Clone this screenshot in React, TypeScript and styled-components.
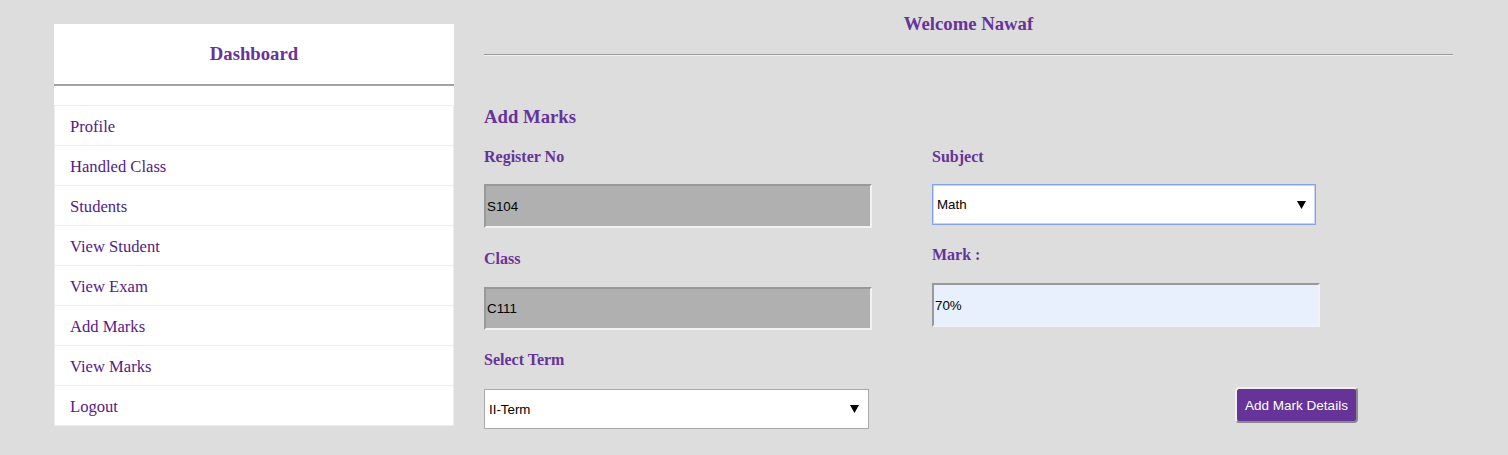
import React from "react";
import styled, { createGlobalStyle } from "styled-components";

const Global = createGlobalStyle`
  html, body { margin: 0; padding: 0; background: #dddddd; }
  body { font-family: "Liberation Serif", "Times New Roman", serif; }
  * { box-sizing: border-box; }
`;

const Page = styled.div`
  display: flex;
  align-items: flex-start;
  padding: 0 55px 0 54px;
  min-height: 455px;
`;

const Sidebar = styled.nav`
  width: 400px;
  flex: none;
  margin-top: 24px;
  background: #ffffff;
`;

const SideHeader = styled.div`
  height: 62px;
  padding-top: 19px;
  border-bottom: 2px solid #a3a3a3;
  text-align: center;
`;

const PurpleTitle = styled.h3`
  margin: 0;
  font-family: "Liberation Serif", "Times New Roman", serif;
  font-size: 18.72px;
  line-height: 22px;
  font-weight: bold;
  color: #663399;
`;

const MenuList = styled.ul`
  list-style: none;
  margin: 19px 0 0 0;
  padding: 0;
`;

const MenuItem = styled.li`
  height: 41px;
  margin-bottom: -1px;
  border: 1px solid #ececec;
  padding: 2px 15px 0;
  display: flex;
  align-items: center;
`;

const MenuLink = styled.a`
  font-family: "Liberation Serif", "Times New Roman", serif;
  font-size: 16.6px;
  color: #551a8b;
  text-decoration: none;
`;

const Main = styled.main`
  flex: 1;
  margin-left: 30px;
`;

const WelcomeBar = styled.div`
  padding-top: 13px;
  height: 54px;
  text-align: center;
`;

const Rule = styled.hr`
  margin: 0;
  border: none;
  border-top: 1px solid #9a9a9a;
  border-bottom: 1px solid #efefef;
`;

const SectionTitle = styled(PurpleTitle)`
  margin-top: 49px;
  line-height: 24px;
`;

const Columns = styled.div`
  display: grid;
  grid-template-columns: 448px 1fr;
`;

const Column = styled.div`
  display: flex;
  flex-direction: column;
  align-items: flex-start;
`;

const Label = styled.label<{ $top: number }>`
  display: block;
  margin-top: ${(p) => p.$top}px;
  font-family: "Liberation Serif", "Times New Roman", serif;
  font-size: 16px;
  font-weight: bold;
  line-height: 20px;
  color: #663399;
`;

const TextBox = styled.input<{ $top: number; $bg: string; $h: number }>`
  display: block;
  margin-top: ${(p) => p.$top}px;
  width: 388px;
  height: ${(p) => p.$h}px;
  padding: 0 1px;
  background: ${(p) => p.$bg};
  border: 2px solid;
  border-color: #999999 #f2f2f2 #f2f2f2 #999999;
  font-family: "Liberation Sans", Arial, sans-serif;
  font-size: 13.33px;
  color: #000000;
  outline: none;
`;

const SelectWrap = styled.div<{ $top: number; $w: number; $h: number }>`
  position: relative;
  margin-top: ${(p) => p.$top}px;
  width: ${(p) => p.$w}px;
  height: ${(p) => p.$h}px;
`;

const Select = styled.select<{ $focus?: boolean }>`
  appearance: none;
  -webkit-appearance: none;
  width: 100%;
  height: 100%;
  margin: 0;
  padding: 0 0 0 4px;
  background: #ffffff;
  border: 1px solid ${(p) => (p.$focus ? "#84a2e4" : "#a9a9a9")};
  box-shadow: ${(p) => (p.$focus ? "inset 0 0 0 1px #c6d4f3" : "none")};
  border-radius: 0;
  font-family: "Liberation Sans", Arial, sans-serif;
  font-size: 13.33px;
  color: #000000;
  outline: none;
`;

const Arrow = styled.svg`
  position: absolute;
  right: 10px;
  top: 50%;
  margin-top: -4px;
  width: 9px;
  height: 8px;
  pointer-events: none;
`;

const SubmitButton = styled.button`
  margin-top: 60px;
  margin-left: 303px;
  width: 123px;
  height: 36px;
  background: #663399;
  color: #ffffff;
  border: 2px solid;
  border-color: #f0f0f0 #8a8a8a #8a8a8a #f0f0f0;
  border-radius: 4px;
  font-family: "Liberation Sans", Arial, sans-serif;
  font-size: 13.5px;
  padding: 0;
`;

const menu = [
  "Profile",
  "Handled Class",
  "Students",
  "View Student",
  "View Exam",
  "Add Marks",
  "View Marks",
  "Logout",
];

const DownArrow = () => (
  <Arrow viewBox="0 0 9 8">
    <path d="M0 0 H9 L4.5 8 Z" fill="#000" />
  </Arrow>
);

export default function App() {
  return (
    <>
      <Global />
      <Page>
        <Sidebar>
          <SideHeader>
            <PurpleTitle>Dashboard</PurpleTitle>
          </SideHeader>
          <MenuList>
            {menu.map((m) => (
              <MenuItem key={m}>
                <MenuLink href="#">{m}</MenuLink>
              </MenuItem>
            ))}
          </MenuList>
        </Sidebar>
        <Main>
          <WelcomeBar>
            <PurpleTitle>Welcome Nawaf</PurpleTitle>
          </WelcomeBar>
          <Rule />
          <SectionTitle>Add Marks</SectionTitle>
          <Columns>
            <Column>
              <Label $top={18}>Register No</Label>
              <TextBox $top={17} $h={44} $bg="#b0b0b0" defaultValue="S104" readOnly />
              <Label $top={21}>Class</Label>
              <TextBox $top={18} $h={43} $bg="#b0b0b0" defaultValue="C111" readOnly />
              <Label $top={20}>Select Term</Label>
              <SelectWrap $top={19} $w={385} $h={40}>
                <Select defaultValue="II-Term">
                  <option>I-Term</option>
                  <option>II-Term</option>
                  <option>III-Term</option>
                </Select>
                <DownArrow />
              </SelectWrap>
            </Column>
            <Column>
              <Label $top={18}>Subject</Label>
              <SelectWrap $top={17} $w={384} $h={41}>
                <Select $focus defaultValue="Math">
                  <option>Math</option>
                  <option>Science</option>
                  <option>English</option>
                </Select>
                <DownArrow />
              </SelectWrap>
              <Label $top={20}>Mark :</Label>
              <TextBox $top={18} $h={44} $bg="#e8f0fe" defaultValue="70%" />
              <SubmitButton>Add Mark Details</SubmitButton>
            </Column>
          </Columns>
        </Main>
      </Page>
    </>
  );
}
